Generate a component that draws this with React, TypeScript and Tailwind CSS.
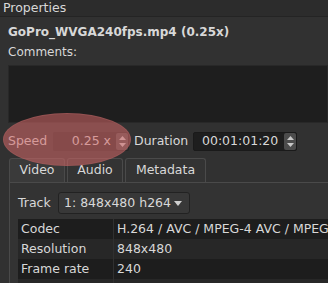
const rows = [
  { label: "Codec", value: "H.264 / AVC / MPEG-4 AVC / MPEG-4 part 10", dark: true },
  { label: "Resolution", value: "848x480", dark: false },
  { label: "Frame rate", value: "240", dark: true },
  { label: "", value: "", dark: false },
];

function SpinArrows() {
  return (
    <div className="flex h-[17px] w-[12px] shrink-0 flex-col items-center justify-center gap-[3px] rounded-[2px] bg-[#4c4c4c]">
      <svg width="7" height="4" viewBox="0 0 7 4">
        <path d="M3.5 0 L7 4 L0 4 Z" fill="#c8c8c8" />
      </svg>
      <svg width="7" height="4" viewBox="0 0 7 4">
        <path d="M0 0 L7 0 L3.5 4 Z" fill="#c8c8c8" />
      </svg>
    </div>
  );
}

function Tab({ label, active, width }: { label: string; active?: boolean; width: string }) {
  return (
    <div
      className={`flex h-[24px] items-center justify-center rounded-t-[3px] border border-b-0 border-[#4a4a4a] ${width} ${
        active ? "bg-[#3a3a3a]" : "bg-[#333333]"
      }`}
    >
      {label}
    </div>
  );
}

export default function App() {
  return (
    <div
      className="relative h-[283px] w-[328px] overflow-hidden bg-[#313131] text-[12.5px] text-[#d8d8d8]"
      style={{ fontFamily: '"DejaVu Sans", sans-serif' }}
    >
      <div className="h-[17px] border-b border-[#242424] bg-[#2c2c2c] pl-[3px] leading-[16px]">
        Properties
      </div>

      <div className="pl-[8px]">
        <div className="mt-[7px] h-[16px] text-[12px] font-bold leading-[16px] whitespace-nowrap">
          GoPro_WVGA240fps.mp4 (0.25x)
        </div>
        <div className="mt-[4px] h-[16px] text-[12px] leading-[16px]">Comments:</div>
        <div className="mt-[5px] h-[58px] border border-[#282828] bg-[#1e1e1e]" />

        <div className="mt-[9px] flex h-[19px] items-center whitespace-nowrap">
          <span className="w-[45px] shrink-0">Speed</span>
          <div className="flex h-[19px] w-[76px] shrink-0 items-center justify-end gap-[5px] rounded-[2px] bg-[#262626] pr-[1px]">
            <span>0.25 x</span>
            <SpinArrows />
          </div>
          <span className="ml-[5px] w-[59px] shrink-0">Duration</span>
          <div className="flex h-[19px] w-[104px] shrink-0 items-center justify-between rounded-[2px] border border-[#1a1a1a] bg-[#1e1e1e] pl-[8px]">
            <span>00:01:01:20</span>
            <SpinArrows />
          </div>
        </div>

        <div className="mt-[7px] ml-[1px] flex gap-[2px]">
          <Tab label="Video" active width="w-[56px]" />
          <Tab label="Audio" width="w-[56px]" />
          <Tab label="Metadata" width="w-[81px]" />
        </div>

        <div className="ml-[1px] h-[120px] border-t border-l border-[#4a4a4a] bg-[#333333] pt-[9px] pl-[8px]">
          <div className="flex h-[22px] items-center whitespace-nowrap">
            <span className="w-[40px] shrink-0">Track</span>
            <div className="flex h-[22px] w-[132px] shrink-0 items-center justify-between rounded-[3px] border border-[#222] bg-[#383838] pl-[5px] pr-[7px]">
              <span>1: 848x480 h264</span>
              <svg width="8" height="5" viewBox="0 0 8 5">
                <path d="M0 0 L8 0 L4 5 Z" fill="#cfcfcf" />
              </svg>
            </div>
          </div>

          <div className="mt-[5px] flex flex-col whitespace-nowrap">
            {rows.map((r, i) => (
              <div
                key={i}
                className={`flex h-[20px] items-center ${r.dark ? "bg-[#1d1d1d]" : "bg-[#272727]"}`}
              >
                <div className="h-full w-[96px] shrink-0 border-r border-[#303030] pl-[3px] leading-[20px]">
                  {r.label}
                </div>
                <div className="shrink-0 pl-[3px] leading-[20px]">{r.value}</div>
              </div>
            ))}
          </div>
        </div>
      </div>

      <div className="pointer-events-none absolute left-[3px] top-[113px] h-[53px] w-[128px] rounded-[50%] border border-[#a05a5a]/60 bg-[rgba(213,103,103,0.55)]" />
    </div>
  );
}
